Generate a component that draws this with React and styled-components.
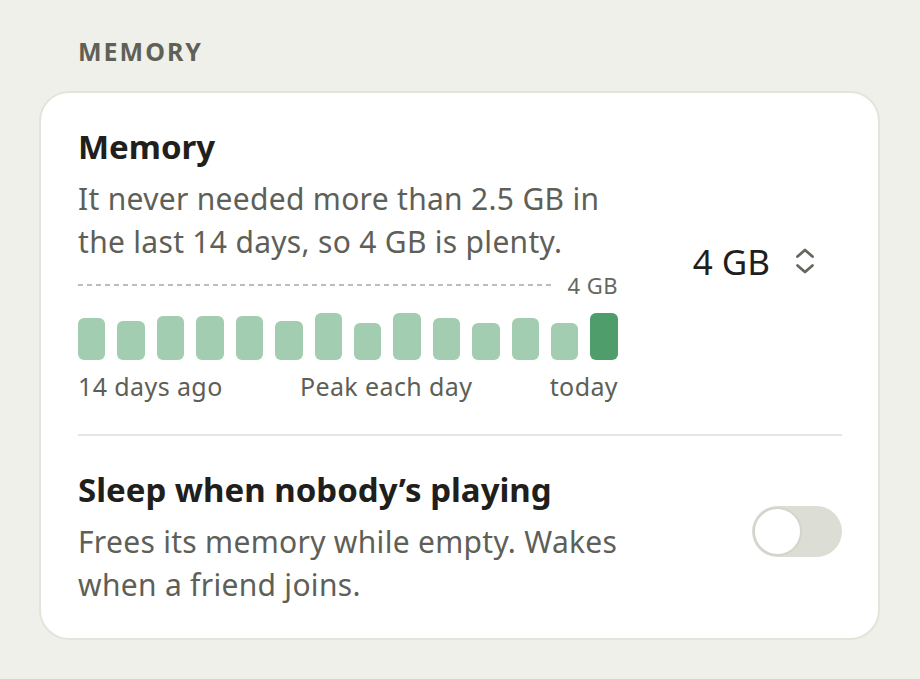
import React from 'react'
import styled, { createGlobalStyle } from 'styled-components'

const GlobalStyle = createGlobalStyle`
  body {
    margin: 0;
    background: #f0f0eb;
    font-family: "Noto Sans", "Open Sans", sans-serif;
  }
`

const Page = styled.div`
  padding: 36px 40px 40px 39px;
`

const SectionLabel = styled.div`
  padding-left: 39px;
  font-size: 25px;
  line-height: 30px;
  font-weight: 700;
  letter-spacing: 2px;
  color: #5f6157;
  margin-bottom: 25px;
`

const Card = styled.div`
  background: #fff;
  border: 2px solid #e4e4dd;
  border-radius: 30px;
  padding: 0 36px 0 37px;
`

const Row = styled.div`
  display: flex;
  align-items: center;
  justify-content: space-between;
  padding: 32px 0 ${p => p.$bottom || 32}px;
`

const Info = styled.div`
  width: 540px;
`

const Title = styled.div`
  font-size: 33px;
  line-height: 44px;
  font-weight: 700;
  color: #1f201c;
`

const Description = styled.div`
  margin-top: 8px;
  font-size: 30px;
  line-height: 43px;
  letter-spacing: 0.3px;
  color: #5e6058;
`

const Chart = styled.div`
  margin-top: 10px;
`

const LimitRow = styled.div`
  display: flex;
  align-items: center;
  gap: 14px;
  height: 24px;
`

const DashedLine = styled.div`
  flex: 1;
  height: 2px;
  background: repeating-linear-gradient(to right, #bdbeb6 0 5px, transparent 5px 9px);
`

const LimitLabel = styled.span`
  font-size: 22px;
  letter-spacing: 0.5px;
  color: #66675f;
`

const Bars = styled.div`
  display: flex;
  align-items: flex-end;
  gap: 12px;
  height: 48px;
  margin-top: 15px;
`

const Bar = styled.div`
  flex: 1;
  border-radius: 6px;
  background: ${p => (p.$today ? '#4e9d6b' : '#a3cdb1')};
`

const Axis = styled.div`
  display: flex;
  justify-content: space-between;
  margin-top: 10px;
  font-size: 25px;
  line-height: 32px;
  letter-spacing: 0.4px;
  color: #5d5f57;
`

const Select = styled.button`
  display: flex;
  align-items: center;
  gap: 25px;
  margin: 0 27px 5px 0;
  padding: 0;
  border: none;
  background: none;
  font-family: inherit;
  font-size: 35px;
  color: #1f201c;
  cursor: pointer;
`

const Divider = styled.div`
  height: 2px;
  background: #e6e6e1;
`

const Toggle = styled.button`
  position: relative;
  width: 90px;
  height: 51px;
  margin-bottom: 12px;
  padding: 0;
  border: none;
  border-radius: 26px;
  background: #dcddd5;
  cursor: pointer;
  flex-shrink: 0;
`

const Knob = styled.span`
  position: absolute;
  left: 1px;
  top: 1px;
  width: 45px;
  height: 45px;
  border-radius: 50%;
  background: #fff;
  border: 2px solid #d3d4cc;
`

const peaks = [42, 39, 44, 44, 44, 39, 47, 37, 47, 42, 37, 42, 37, 47]

const UpDown = () => (
  <svg width="20" height="28" viewBox="0 0 20 28" fill="none" stroke="#66675f" strokeWidth="2.8" strokeLinecap="round" strokeLinejoin="round">
    <path d="M2.5 9.5 L10 3 L17.5 9.5" />
    <path d="M2.5 18.5 L10 25 L17.5 18.5" />
  </svg>
)

export default function App() {
  return (
    <Page>
      <GlobalStyle />
      <SectionLabel>MEMORY</SectionLabel>
      <Card>
        <Row>
          <Info>
            <Title>Memory</Title>
            <Description>It never needed more than 2.5 GB in the last 14 days, so 4 GB is plenty.</Description>
            <Chart>
              <LimitRow>
                <DashedLine />
                <LimitLabel>4 GB</LimitLabel>
              </LimitRow>
              <Bars>
                {peaks.map((h, i) => (
                  <Bar key={i} $today={i === peaks.length - 1} style={{ height: h }} />
                ))}
              </Bars>
              <Axis>
                <span>14 days ago</span>
                <span>Peak each day</span>
                <span>today</span>
              </Axis>
            </Chart>
          </Info>
          <Select>
            4 GB
            <UpDown />
          </Select>
        </Row>
        <Divider />
        <Row>
          <Info>
            <Title>Sleep when nobody’s playing</Title>
            <Description>Frees its memory while empty. Wakes when a friend joins.</Description>
          </Info>
          <Toggle>
            <Knob />
          </Toggle>
        </Row>
      </Card>
    </Page>
  )
}
